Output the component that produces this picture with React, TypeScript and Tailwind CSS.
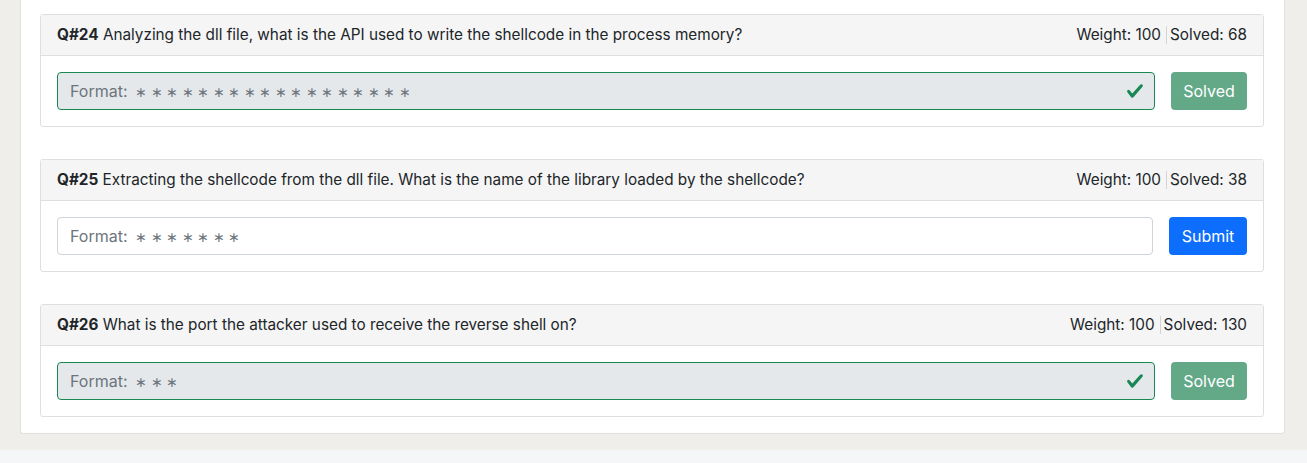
import React from "react";

type Q = {
  num: number;
  text: string;
  weight: number;
  solved: number;
  stars: number;
  done: boolean;
};

const questions: Q[] = [
  { num: 24, text: "Analyzing the dll file, what is the API used to write the shellcode in the process memory?", weight: 100, solved: 68, stars: 18, done: true },
  { num: 25, text: "Extracting the shellcode from the dll file. What is the name of the library loaded by the shellcode?", weight: 100, solved: 38, stars: 7, done: false },
  { num: 26, text: "What is the port the attacker used to receive the reverse shell on?", weight: 100, solved: 130, stars: 3, done: true },
];

function Check() {
  return (
    <svg viewBox="0 0 8 8" width="18" height="18" className="shrink-0">
      <path fill="#198754" d="M2.3 6.73.6 4.53c-.4-1.04.46-1.4 1.1-.8l1.1 1.4 3.4-3.8c.6-.63 1.6-.27 1.2.7l-4 4.6c-.43.5-.8.4-1.1.1z" />
    </svg>
  );
}

function Card({ q }: { q: Q }) {
  const stars = Array(q.stars).fill("\u2217").join(" ");
  return (
    <div className="border border-[#dfdfdf] rounded-[3px] bg-white">
      <div className="h-[41px] bg-[#f5f5f5] border-b border-[#dfdfdf] px-4 flex items-center justify-between text-[15.3px] text-[#212529]">
        <div>
          <span className="font-bold">Q#{q.num}</span> {q.text}
        </div>
        <div className="flex items-center">
          <span className="pr-[5px] border-r border-[#d5d5d5] leading-[18px]">Weight: {q.weight}</span>
          <span className="pl-[3px]">Solved: {q.solved}</span>
        </div>
      </div>
      <div className="p-4 flex gap-4">
        <div
          className={
            q.done
              ? "flex-1 h-[38px] rounded-[4px] border border-[#198754] bg-[#e5e8eb] flex items-center pl-3 pr-[10px]"
              : "flex-1 h-[38px] rounded-[4px] border border-[#ced4da] bg-white flex items-center pl-3 pr-[10px]"
          }
        >
          <span className="flex-1 text-[#6c757d] whitespace-pre">
            <span className="text-[16px]">Format: </span>
            <span className="ml-[3px] text-[14.3px] tracking-[-0.25px]">{stars}</span>
          </span>
          {q.done && <Check />}
        </div>
        {q.done ? (
          <div className="w-[76px] h-[38px] rounded-[4px] bg-[#63a988] text-white text-[16px] flex items-center justify-center">
            Solved
          </div>
        ) : (
          <div className="w-[78px] h-[38px] rounded-[4px] bg-[#0d6efd] text-white text-[16px] flex items-center justify-center">
            Submit
          </div>
        )}
      </div>
    </div>
  );
}

export default function App() {
  return (
    <div className="w-[1307px] h-[463px] overflow-hidden bg-[#efeeeb] flex flex-col" style={{ fontFamily: "Inter, 'Noto Sans', sans-serif" }}>
      <div className="pl-5 pr-[22px]">
        <div className="bg-white border border-[#e0e0e0] border-t-0 rounded-b-[4px] pl-[19px] pr-[20px] pt-[14px] pb-4 flex flex-col gap-8">
          {questions.map((q) => (
            <Card key={q.num} q={q} />
          ))}
        </div>
      </div>
      <div className="h-4 shrink-0" />
      <div className="flex-1 bg-[#f5f6f8]" />
    </div>
  );
}
